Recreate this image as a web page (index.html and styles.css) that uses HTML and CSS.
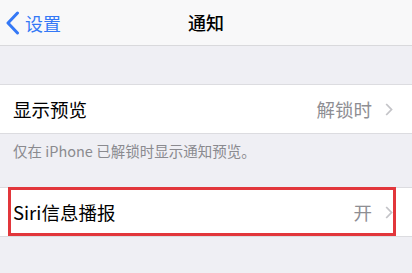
FILE: index.html
```html
<!DOCTYPE html>
<html lang="zh-CN">
<head>
<meta charset="utf-8">
<link rel="stylesheet" href="styles.css">
</head>
<body>
<div class="nav">
  <div class="back">
    <svg class="back-icon" width="15" height="24" viewBox="0 0 15 24"><polyline points="12.5,2 3,12 12.5,22" fill="none" stroke="#3478f6" stroke-width="3" stroke-linecap="round" stroke-linejoin="round"/></svg>
    <span class="back-text">设置</span>
  </div>
  <div class="title">通知</div>
</div>
<div class="spacer"></div>
<div class="row">
  <span class="label">显示预览</span>
  <span class="value">解锁时</span>
  <svg class="chev" width="8" height="13" viewBox="0 0 8 13"><polyline points="1.2,1 6.5,6.5 1.2,12" fill="none" stroke="#c4c4c8" stroke-width="1.8"/></svg>
</div>
<div class="footer">仅在 iPhone 已解锁时显示通知预览。</div>
<div class="row row-siri">
  <span class="label">Siri信息播报</span>
  <span class="value">开</span>
  <svg class="chev" width="8" height="13" viewBox="0 0 8 13"><polyline points="1.2,1 6.5,6.5 1.2,12" fill="none" stroke="#c4c4c8" stroke-width="1.8"/></svg>
  <div class="highlight"></div>
</div>
</body>
</html>
```
FILE: styles.css
```css
html, body {
  margin: 0;
  padding: 0;
  background: #efeff4;
  font-family: "Noto Sans CJK SC", "Noto Sans", sans-serif;
  width: 412px;
  height: 273px;
  overflow: hidden;
}
.nav {
  height: 45px;
  background: #f8f8f9;
  border-bottom: 1px solid #d9d9dc;
  position: relative;
  display: flex;
  align-items: center;
}
.back {
  display: flex;
  align-items: center;
  padding-left: 5px;
  gap: 5px;
}
.back-icon {
  display: block;
}
.back-text {
  color: #3478f6;
  font-size: 18px;
  line-height: 22px;
}
.title {
  position: absolute;
  left: 0;
  right: 0;
  top: 0;
  height: 45px;
  line-height: 45px;
  text-align: center;
  font-size: 18px;
  font-weight: 500;
  color: #000;
  pointer-events: none;
}
.spacer {
  height: 38px;
}
.row {
  height: 48px;
  background: #fff;
  border-top: 1px solid #dcdce0;
  border-bottom: 1px solid #dcdce0;
  display: flex;
  align-items: center;
  padding: 0 19px 0 13px;
}
.label {
  font-size: 18.5px;
  color: #000;
  flex: 1;
}
.value {
  font-size: 18.5px;
  color: #8e8e93;
  margin-right: 13px;
}
.chev {
  display: block;
}
.footer {
  height: 53px;
  padding: 7px 13px 0;
  box-sizing: border-box;
  font-size: 14.5px;
  line-height: 20px;
  color: #8a8a8f;
}
.row-siri {
  position: relative;
}
.highlight {
  position: absolute;
  left: 8px;
  top: -1px;
  width: 388px;
  height: 49px;
  box-sizing: border-box;
  border: 3px solid #e2363b;
}
```
